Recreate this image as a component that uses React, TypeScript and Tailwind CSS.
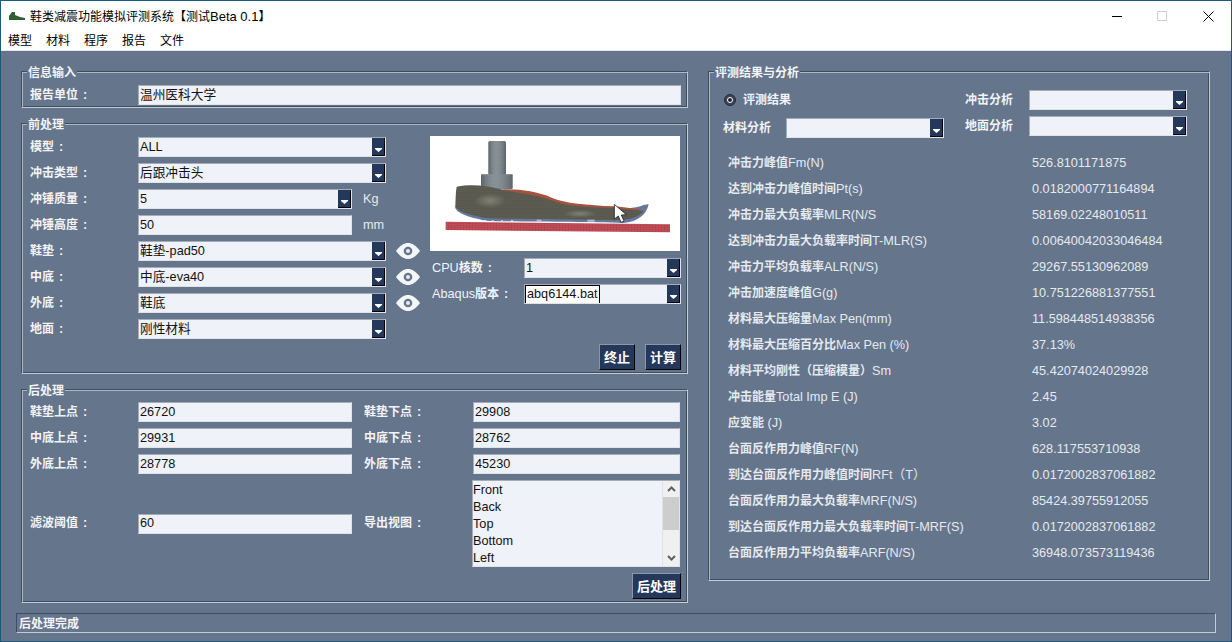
import type { ReactNode } from 'react';

// bold CJK run, latin stays regular like the original GDI fallback
const Cn = ({ children }: { children: ReactNode }) => <span className="font-bold text-[12px]">{children}</span>;

const Label = ({ children, w = 'w-[108px]', colon = true }: { children: ReactNode; w?: string; colon?: boolean }) => (
  <div className={`${w} shrink-0 text-[#f2f4f8] whitespace-nowrap`}>
    {children}
    {colon && <span className="ml-[5px] font-bold">:</span>}
  </div>
);

const TextField = ({ value, w = 'w-[214px]' }: { value: string; w?: string }) => (
  <div className={`${w} h-5 shrink-0 flex items-center pl-[1px] bg-[#eff2f8] border border-[#a3acb8] border-r-[#dfe3e9] border-b-[#dfe3e9] text-[#111] whitespace-nowrap overflow-hidden`}>
    {value}
  </div>
);

const Combo = ({ value = '', w = 'w-[248px]', focused = false }: { value?: string; w?: string; focused?: boolean }) => (
  <div className={`${w} h-5 shrink-0 flex bg-[#eff2f8] border border-[#a3acb8] border-r-[#dfe3e9] border-b-[#dfe3e9] text-[#111] whitespace-nowrap`}>
    <div className="flex-1 flex items-center overflow-hidden">
      <span className={focused ? 'bg-white outline outline-1 outline-black ml-[1px] px-[1px] leading-[17px]' : 'pl-[1px]'}>{value}</span>
    </div>
    <div className="w-[13px] shrink-0 bg-[#24385c] border-r border-b border-black flex items-end justify-center pb-[3px]">
      <svg width="7" height="4" viewBox="0 0 7 4"><path d="M0 0h7v1L3.500 4 0 1z" fill="#fff" /></svg>
    </div>
  </div>
);

const Eye = () => (
  <svg className="ml-[10px] shrink-0" width="24" height="16" viewBox="0 0 24 16">
    <path d="M0 8C4 2.500 8 0 12 0s8 2.500 12 8c-4 5.500-8 8-12 8S4 13.500 0 8z" fill="#f4f6f9" />
    <circle cx="12" cy="8" r="4.300" fill="#65758b" />
    <circle cx="12" cy="8" r="2" fill="#e8ecf1" />
  </svg>
);

const Btn = ({ children, w = 'w-9' }: { children: ReactNode; w?: string }) => (
  <div className={`${w} h-[26px] flex items-center justify-center bg-[#24385c] border border-[#8c98a8] border-r-black border-b-black text-white text-[13px] font-bold`}>
    {children}
  </div>
);

const Group = ({ title, className = '', children }: { title: string; className?: string; children: ReactNode }) => (
  <div className={`relative border border-[#3f4d61] border-r-[#c3cbd4] border-b-[#c3cbd4] shadow-[inset_1px_1px_0_#aeb8c4,inset_-1px_-1px_0_#3f4d61] ${className}`}>
    <div className="absolute left-[5px] -top-[6px] px-[1px] h-[15px] leading-[15px] bg-[#65758b] text-[#f2f4f8] font-bold text-[12px]">{title}</div>
    {children}
  </div>
);

const ShoeImage = () => (
  <svg className="block w-[250px] h-[115px] bg-white" viewBox="0 3 750 345">
    <defs>
      <pattern id="mesh" width="6" height="6" patternUnits="userSpaceOnUse">
        <rect width="6" height="6" fill="#66665a" />
        <circle cx="3" cy="3" r="1.700" fill="#2e2e28" />
      </pattern>
      <pattern id="steel" width="6" height="6" patternUnits="userSpaceOnUse">
        <rect width="6" height="6" fill="#849096" />
        <circle cx="3" cy="3" r="1.500" fill="#4c575d" />
      </pattern>
      <pattern id="plate" width="9" height="6" patternUnits="userSpaceOnUse">
        <rect width="9" height="6" fill="#c44f59" />
        <path d="M0 0h9M0 0v6" stroke="#8f323c" strokeWidth="1.500" />
      </pattern>
      <linearGradient id="shine" x1="0" y1="0" x2="1" y2="0">
        <stop offset="0" stopColor="#000" stopOpacity=".25" />
        <stop offset=".45" stopColor="#fff" stopOpacity=".1" />
        <stop offset="1" stopColor="#000" stopOpacity=".25" />
      </linearGradient>
      <radialGradient id="glow">
        <stop offset="0" stopColor="#c8c8b8" stopOpacity=".35" />
        <stop offset="1" stopColor="#c8c8b8" stopOpacity="0" />
      </radialGradient>
    </defs>
    <rect x="175" y="18" width="53" height="102" rx="5" fill="url(#steel)" />
    <rect x="175" y="18" width="53" height="102" rx="5" fill="url(#shine)" />
    <rect x="153" y="118" width="95" height="44" rx="3" fill="url(#steel)" />
    <rect x="153" y="118" width="95" height="44" rx="3" fill="url(#shine)" />
    <path d="M47 260L720 268V292L47 285z" fill="url(#plate)" />
    <path d="M74 214C78 235 110 245 165 257C300 262 480 260 580 264C620 262 650 240 656 208L640 210C610 230 300 235 74 214z" fill="#66779c" />
    <path d="M215 163C260 162 320 168 365 188C405 205 470 210 555 214L625 222L640 228L560 240C440 225 300 190 215 163z" fill="#a5523f" />
    <path d="M80 155C120 147 165 150 210 162C250 172 320 178 370 198C410 214 470 216 555 220L642 228C625 246 600 254 560 256C420 252 250 254 165 249C120 240 85 232 76 214C77 190 77 170 80 155z" fill="url(#mesh)" />
    <ellipse cx="180" cy="197" rx="48" ry="22" fill="url(#glow)" />
    <ellipse cx="450" cy="236" rx="50" ry="12" fill="url(#glow)" />
    <g fill="#e9ecef">
      <rect x="162" y="255" width="7" height="5" />
      <rect x="185" y="256" width="6" height="5" />
      <rect x="214" y="256" width="5" height="4" />
      <rect x="243" y="256" width="6" height="5" />
      <rect x="320" y="254" width="14" height="5" opacity=".6" />
      <rect x="472" y="254" width="22" height="6" opacity=".6" />
    </g>
    <path d="M553 208V252L565 243L573 262L582 258L574 240L589 239z" fill="#fff" stroke="#222" strokeWidth="2.500" strokeLinejoin="round" />
  </svg>
);

const results: [string, string, string][] = [
  ['冲击力峰值', 'Fm(N)', '526.8101171875'],
  ['达到冲击力峰值时间', 'Pt(s)', '0.0182000771164894'],
  ['冲击力最大负载率', 'MLR(N/S', '58169.02248010511'],
  ['达到冲击力最大负载率时间', 'T-MLR(S)', '0.00640042033046484'],
  ['冲击力平均负载率', 'ALR(N/S)', '29267.55130962089'],
  ['冲击加速度峰值', 'G(g)', '10.751226881377551'],
  ['材料最大压缩量', 'Max Pen(mm)', '11.598448514938356'],
  ['材料最大压缩百分比', 'Max Pen (%)', '37.13%'],
  ['材料平均刚性（压缩模量）', 'Sm', '45.42074024029928'],
  ['冲击能量', 'Total Imp E (J)', '2.45'],
  ['应变能', ' (J)', '3.02'],
  ['台面反作用力峰值', 'RF(N)', '628.117553710938'],
  ['到达台面反作用力峰值时间', 'RFt（T）', '0.0172002837061882'],
  ['台面反作用力最大负载率', 'MRF(N/S)', '85424.39755912055'],
  ['到达台面反作用力最大负载率时间', 'T-MRF(S)', '0.0172002837061882'],
  ['台面反作用力平均负载率', 'ARF(N/S)', '36948.073573119436'],
];

export default function App() {
  return (
    <div className="w-[1232px] h-[642px] flex flex-col overflow-hidden border border-[#1b5a7c] font-['Liberation_Sans','Noto_Sans_CJK_SC',sans-serif] text-[12.7px] leading-none">
      {/* title bar */}
      <div className="h-[29px] shrink-0 bg-white flex items-center pt-[1px] text-black">
        <svg className="ml-[8px] shrink-0" width="16" height="8" viewBox="0 0 16 8">
          <path d="M3 0h3v3l5 2 5 1v2H0V4z" fill="#2f5f34" />
        </svg>
        <span className="ml-[5px] text-[12px] whitespace-nowrap">鞋类减震功能模拟评测系统【测试<span className="text-[13px]">Beta 0.1</span>】</span>
        <div className="ml-auto flex items-center">
          <svg className="mr-[35px]" width="10" height="10" viewBox="0 0 10 10"><path d="M0 5.500h10" stroke="#000" /></svg>
          <svg className="mr-[36px]" width="10" height="10" viewBox="0 0 10 10"><rect x=".5" y=".5" width="9" height="9" fill="none" stroke="#ccc" /></svg>
          <svg className="mr-[17px]" width="11" height="11" viewBox="0 0 11 11"><path d="M.5.500l10 10M10.500.500l-10 10" stroke="#000" /></svg>
        </div>
      </div>
      {/* menu */}
      <div className="h-[21px] shrink-0 bg-white flex items-center gap-[14px] pl-[7px] pt-[2px] text-[12px] text-black border-b border-[#e8e8e8]">
        <span>模型</span>
        <span>材料</span>
        <span>程序</span>
        <span>报告</span>
        <span>文件</span>
      </div>

      <div className="flex-1 bg-[#65758b] flex flex-col">
        <div className="h-[562px] shrink-0 flex pl-[20px] pt-[20px]">
          {/* left column */}
          <div className="w-[667px] shrink-0 flex flex-col gap-[15px]">
            <Group title="信息输入" className="h-[37px] pt-[13px] pl-[8px]">
              <div className="flex items-center">
                <Label><Cn>报告单位</Cn></Label>
                <TextField value="温州医科大学" w="w-[543px]" />
              </div>
            </Group>

            <Group title="前处理" className="h-[251px] pt-[12px] pl-[8px] pr-[6px]">
              <div className="flex">
                <div className="w-[400px] shrink-0 mt-[1px] flex flex-col gap-[6px]">
                  <div className="flex items-center"><Label><Cn>模型</Cn></Label><Combo value="ALL" /></div>
                  <div className="flex items-center"><Label><Cn>冲击类型</Cn></Label><Combo value="后跟冲击头" /></div>
                  <div className="flex items-center">
                    <Label><Cn>冲锤质量</Cn></Label>
                    <Combo value="5" w="w-[214px]" />
                    <span className="ml-[11px] text-[#e6eaef]">Kg</span>
                  </div>
                  <div className="flex items-center">
                    <Label><Cn>冲锤高度</Cn></Label>
                    <TextField value="50" />
                    <span className="ml-[11px] text-[#e6eaef]">mm</span>
                  </div>
                  <div className="flex items-center"><Label><Cn>鞋垫</Cn></Label><Combo value="鞋垫-pad50" /><Eye /></div>
                  <div className="flex items-center"><Label><Cn>中底</Cn></Label><Combo value="中底-eva40" /><Eye /></div>
                  <div className="flex items-center"><Label><Cn>外底</Cn></Label><Combo value="鞋底" /><Eye /></div>
                  <div className="flex items-center"><Label><Cn>地面</Cn></Label><Combo value="刚性材料" /></div>
                </div>
                <div className="w-[251px] shrink-0 flex flex-col">
                  <ShoeImage />
                  <div className="mt-[7px] flex items-center pl-[2px]">
                    <Label w="w-[92px]">CPU<Cn>核数</Cn></Label>
                    <Combo value="1" w="w-[157px]" />
                  </div>
                  <div className="mt-[6px] flex items-center pl-[2px]">
                    <Label w="w-[92px]">Abaqus<Cn>版本</Cn></Label>
                    <Combo value="abq6144.bat" w="w-[157px]" focused />
                  </div>
                </div>
              </div>
              <div className="mt-[5px] flex justify-end gap-[10px]">
                <Btn>终止</Btn>
                <Btn>计算</Btn>
              </div>
            </Group>

            <Group title="后处理" className="h-[214px] pt-[12px] pl-[8px] pr-[6px]">
              <div className="flex flex-col gap-[6px]">
                <div className="flex items-center">
                  <Label><Cn>鞋垫上点</Cn></Label><TextField value="26720" />
                  <div className="w-3" /><Label w="w-[109px]"><Cn>鞋垫下点</Cn></Label><TextField value="29908" w="w-[207px]" />
                </div>
                <div className="flex items-center">
                  <Label><Cn>中底上点</Cn></Label><TextField value="29931" />
                  <div className="w-3" /><Label w="w-[109px]"><Cn>中底下点</Cn></Label><TextField value="28762" w="w-[207px]" />
                </div>
                <div className="flex items-center">
                  <Label><Cn>外底上点</Cn></Label><TextField value="28778" />
                  <div className="w-3" /><Label w="w-[109px]"><Cn>外底下点</Cn></Label><TextField value="45230" w="w-[207px]" />
                </div>
                <div className="flex items-center">
                  <Label><Cn>滤波阈值</Cn></Label><TextField value="60" />
                  <div className="w-3" /><Label w="w-[108px]"><Cn>导出视图</Cn></Label>
                  <div className="w-[208px] h-[87px] flex bg-[#eff2f8] border border-[#a3acb8] border-r-[#dfe3e9] border-b-[#dfe3e9] text-[#111] overflow-hidden">
                    <div className="flex-1 pt-[1px] leading-[17px]">
                      <div>Front</div>
                      <div>Back</div>
                      <div>Top</div>
                      <div>Bottom</div>
                      <div>Left</div>
                    </div>
                    <div className="w-[17px] shrink-0 bg-[#f0f0f0] flex flex-col items-center border-l border-[#dfe3e9]">
                      <svg className="mt-[5px]" width="9" height="6" viewBox="0 0 9 6"><path d="M1 5l3.500-3.500L8 5" fill="none" stroke="#606060" strokeWidth="2" /></svg>
                      <div className="w-full h-[33px] mt-[5px] bg-[#cdcdcd]" />
                      <svg className="mt-auto mb-[5px]" width="9" height="6" viewBox="0 0 9 6"><path d="M1 1l3.500 3.500L8 1" fill="none" stroke="#606060" strokeWidth="2" /></svg>
                    </div>
                  </div>
                </div>
              </div>
              <div className="mt-[6px] flex justify-end">
                <Btn w="w-[49px]">后处理</Btn>
              </div>
            </Group>
          </div>

          {/* right column */}
          <div className="ml-[20px] w-[502px] shrink-0">
            <Group title="评测结果与分析" className="h-[510px] pt-[18px] pl-[14px]">
              <div className="flex">
                <div className="w-[242px] shrink-0">
                  <div className="h-[19px] flex items-center pl-[1px] pt-[1px]">
                    <div className="w-3 h-3 rounded-full bg-[#3a4657] border border-[#222c3a] flex items-center justify-center">
                      <div className="w-[6px] h-[6px] rounded-full bg-[#20252e] border border-white" />
                    </div>
                    <span className="ml-[7px] text-[#f2f4f8]"><Cn>评测结果</Cn></span>
                  </div>
                  <div className="mt-[9px] flex items-center">
                    <span className="w-[63px] text-[#f2f4f8]"><Cn>材料分析</Cn></span>
                    <Combo w="w-[158px]" />
                  </div>
                </div>
                <div className="flex flex-col gap-[6px]">
                  <div className="flex items-center">
                    <span className="w-[64px] text-[#f2f4f8]"><Cn>冲击分析</Cn></span>
                    <Combo w="w-[158px]" />
                  </div>
                  <div className="flex items-center">
                    <span className="w-[64px] text-[#f2f4f8]"><Cn>地面分析</Cn></span>
                    <Combo w="w-[158px]" />
                  </div>
                </div>
              </div>
              <div className="mt-[16px] pl-[5px] flex flex-col gap-[8px]">
                {results.map(([cn, en, val]) => (
                  <div key={cn} className="h-[18px] flex items-center text-[#e6eaef] whitespace-nowrap">
                    <div className="w-[304px] shrink-0"><Cn>{cn}</Cn>{en}</div>
                    <div>{val}</div>
                  </div>
                ))}
              </div>
            </Group>
          </div>
        </div>

        {/* status */}
        <div className="ml-[15px] w-[1200px] h-5 flex items-center pl-[2px] pt-[1px] border border-[#3f4d61] border-r-[#c3cbd4] border-b-[#c3cbd4] text-[#f2f4f8]">
          <Cn>后处理完成</Cn>
        </div>
      </div>
    </div>
  );
}
